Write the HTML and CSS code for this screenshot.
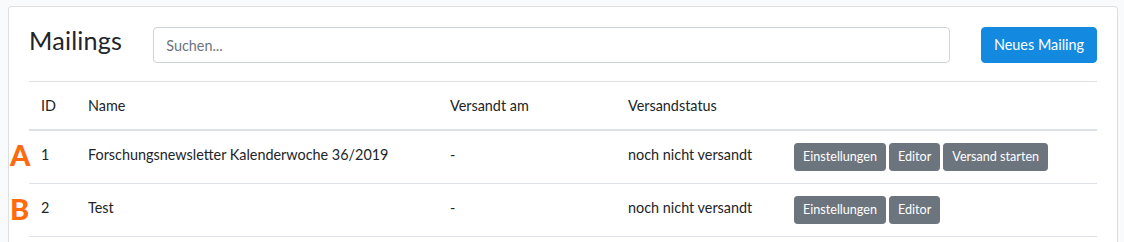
FILE: index.html
```html
<!DOCTYPE html>
<html lang="de">
<head>
  <meta charset="UTF-8">
  <meta name="viewport" content="width=device-width, initial-scale=1.0">
  <title>Mailings</title>
  <link rel="stylesheet" href="styles.css">
</head>
<body>
  <div class="card">
    <div class="card-body">
      <div class="toolbar">
        <h3 class="title">Mailings</h3>
        <input type="text" class="search" placeholder="Suchen...">
        <button type="button" class="btn btn-primary">Neues Mailing</button>
      </div>

      <table class="table">
        <colgroup>
          <col class="col-id">
          <col class="col-name">
          <col class="col-date">
          <col class="col-status">
          <col>
        </colgroup>
        <thead>
          <tr>
            <th>ID</th>
            <th>Name</th>
            <th>Versandt am</th>
            <th>Versandstatus</th>
            <th></th>
          </tr>
        </thead>
        <tbody>
          <tr>
            <td class="cell-id"><span class="marker">A</span>1</td>
            <td>Forschungsnewsletter Kalenderwoche 36/2019</td>
            <td>-</td>
            <td>noch nicht versandt</td>
            <td>
              <div class="actions">
                <button type="button" class="btn btn-sm">Einstellungen</button>
                <button type="button" class="btn btn-sm">Editor</button>
                <button type="button" class="btn btn-sm">Versand starten</button>
              </div>
            </td>
          </tr>
          <tr>
            <td class="cell-id"><span class="marker marker-b">B</span>2</td>
            <td>Test</td>
            <td>-</td>
            <td>noch nicht versandt</td>
            <td>
              <div class="actions">
                <button type="button" class="btn btn-sm">Einstellungen</button>
                <button type="button" class="btn btn-sm">Editor</button>
              </div>
            </td>
          </tr>
        </tbody>
      </table>
    </div>
  </div>
</body>
</html>
```
FILE: styles.css
```css
html, body {
  margin: 0;
  background-color: #f8fafc;
}

body {
  font-family: Lato, "Liberation Sans", sans-serif;
  font-size: 14.4px;
  line-height: 1.6;
  color: #212529;
  padding: 6px 6px 0 8px;
}

/* Card */
.card {
  background-color: #fff;
  border: 1px solid rgba(0, 0, 0, 0.125);
  border-radius: 4px;
}

.card-body {
  padding: 20px;
}

/* Top bar with title, search and button */
.toolbar {
  display: flex;
  align-items: flex-start;
  gap: 31px;
  margin-bottom: 18px;
}

.title {
  margin: 0;
  font-size: 25.2px;
  font-weight: 400;
  line-height: 26px;
  letter-spacing: 0.2px;
}

.search {
  flex: 1;
  box-sizing: border-box;
  height: 36px;
  padding: 6px 12px;
  font-family: inherit;
  font-size: 14.4px;
  color: #495057;
  border: 1px solid #ced4da;
  border-radius: 4px;
}

.search::placeholder {
  color: #6c757d;
}

.btn {
  font-family: inherit;
  font-size: 14.4px;
  line-height: 22px;
  padding: 6px 12px;
  border: 1px solid transparent;
  border-radius: 4px;
  cursor: pointer;
  color: #fff;
}

.btn-primary {
  background-color: #138ae0;
  border-color: #138ae0;
}

.btn-sm {
  font-size: 12.6px;
  line-height: 18px;
  padding: 4px 8px;
  border-radius: 3.2px;
  background-color: #6c757d;
  border-color: #6c757d;
}

/* Table */
.table {
  width: 100%;
  border-collapse: collapse;
  table-layout: fixed;
}

.col-id { width: 47px; }
.col-name { width: 362px; }
.col-date { width: 178px; }
.col-status { width: 166px; }

.table th,
.table td {
  padding: 12px;
  text-align: left;
  vertical-align: top;
  border-top: 1px solid #dee2e6;
  font-weight: 400;
}

.table thead th {
  border-bottom: 2px solid #dee2e6;
}

.table tbody tr:first-child td {
  border-top: none;
}

.table tbody td {
  border-bottom: 1px solid #dee2e6;
}

.actions {
  display: flex;
  gap: 3px;
}

/* Orange annotation letters */
.cell-id {
  position: relative;
}

.marker {
  position: absolute;
  left: -19px;
  top: 10px;
  font-size: 29px;
  line-height: 28px;
  font-weight: 900;
  color: #ff6a0f;
}

.marker-b {
  top: 11px;
}
```
